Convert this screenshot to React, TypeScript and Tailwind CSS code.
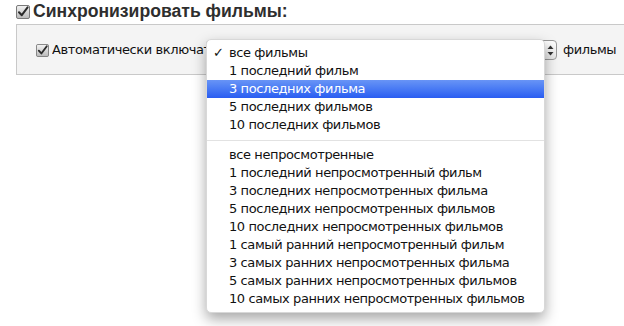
import React from 'react';

const Checkbox: React.FC<{ size?: number }> = ({ size = 14 }) => (
  <svg width={size} height={size} viewBox="0 0 14 14" className="shrink-0">
    <defs>
      <linearGradient id="cbg" x1="0" y1="0" x2="0" y2="1">
        <stop offset="0" stopColor="#f4f4f4" />
        <stop offset="1" stopColor="#b9b9b9" />
      </linearGradient>
    </defs>
    <rect x="0.5" y="0.5" width="13" height="13" rx="1.5" fill="url(#cbg)" stroke="#7a7a7a" />
    <path d="M3 7.2 L5.8 10.2 L11.6 2.4" fill="none" stroke="#2b2b2b" strokeWidth="2" strokeLinecap="round" strokeLinejoin="round" />
  </svg>
);

const firstGroup = ['все фильмы', '1 последний фильм', '3 последних фильма', '5 последних фильмов', '10 последних фильмов'];
const secondGroup = [
  'все непросмотренные',
  '1 последний непросмотренный фильм',
  '3 последних непросмотренных фильма',
  '5 последних непросмотренных фильмов',
  '10 последних непросмотренных фильмов',
  '1 самый ранний непросмотренный фильм',
  '3 самых ранних непросмотренных фильма',
  '5 самых ранних непросмотренных фильмов',
  '10 самых ранних непросмотренных фильмов',
];

const MenuItem: React.FC<{ label: string; checked?: boolean; active?: boolean }> = ({ label, checked, active }) => (
  <div
    className={`relative h-[18px] flex items-center pl-[22px] whitespace-nowrap ${
      active ? 'bg-gradient-to-b from-[#6894f6] to-[#2a5cf1] text-white' : 'text-[#111]'
    }`}
  >
    {checked && <span className="absolute left-[6px] top-0 leading-[18px] font-bold">✓</span>}
    {label}
  </div>
);

export default function App() {
  return (
    <div
      className="relative w-[624px] h-[326px] bg-white overflow-hidden tracking-[-0.4px]"
      style={{ fontFamily: '"DejaVu Sans", sans-serif' }}
    >
      {/* Header */}
      <div className="flex items-center gap-[3px] pl-[16px] pt-[3px] h-[20px]">
        <Checkbox />
        <span
          className="text-[17.6px] font-bold text-[#2e2e2e] leading-none tracking-normal"
          style={{ fontFamily: '"Liberation Sans", Arial, sans-serif' }}
        >
          Синхронизировать фильмы:
        </span>
      </div>

      {/* Settings box */}
      <div className="mt-[4px] ml-[16px] w-[620px] h-[51px] bg-[#f4f4f4] border border-[#c9c9c9] pt-[15px] pl-[19px]">
        <div className="flex items-center h-[20px] text-[13px] text-[#111]">
          <Checkbox size={13} />
          <span className="ml-[3px] w-[154px] overflow-hidden whitespace-nowrap">Автоматически включать</span>
          <div className="w-[351px] h-[20px] flex justify-end rounded-[4px] border border-[#9a9a9a] bg-gradient-to-b from-white to-[#e6e6e6]">
            <div className="w-[12px] flex items-center justify-center">
              <svg width="7" height="11" viewBox="0 0 7 11">
                <path d="M3.5 0.5 L6.5 4 L0.5 4 Z" fill="#333" />
                <path d="M3.5 10.5 L6.5 7 L0.5 7 Z" fill="#333" />
              </svg>
            </div>
          </div>
          <span className="ml-[6px]">фильмы</span>
        </div>
      </div>

      {/* Popup menu */}
      <div className="absolute left-[206px] top-[39px] w-[339px] bg-white rounded-[5px] border border-[#d8d8d8] shadow-[0_6px_14px_rgba(0,0,0,0.35)] pt-[4px] pb-[4px] text-[13px]">
        {firstGroup.map((l, i) => (
          <MenuItem key={l} label={l} checked={i === 0} active={i === 2} />
        ))}
        <div className="h-[12px] flex items-center">
          <div className="w-full h-px bg-[#e2e2e2]" />
        </div>
        {secondGroup.map((l) => (
          <MenuItem key={l} label={l} />
        ))}
      </div>
    </div>
  );
}
